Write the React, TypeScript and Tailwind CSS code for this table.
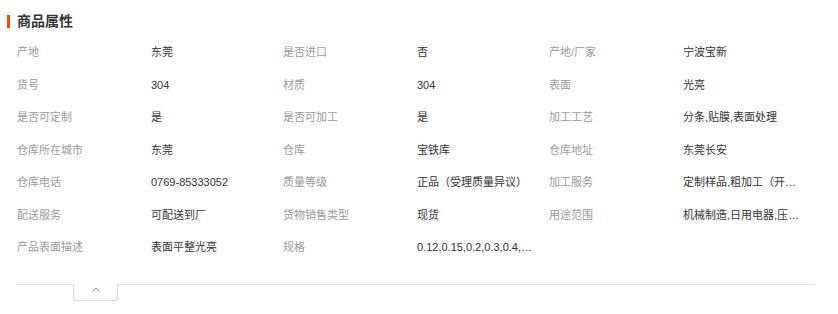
import React from 'react';

type Attr = { label: string; value: string };

const attrs: Attr[] = [
  { label: '产地', value: '东莞' },
  { label: '是否进口', value: '否' },
  { label: '产地/厂家', value: '宁波宝新' },
  { label: '货号', value: '304' },
  { label: '材质', value: '304' },
  { label: '表面', value: '光亮' },
  { label: '是否可定制', value: '是' },
  { label: '是否可加工', value: '是' },
  { label: '加工工艺', value: '分条,贴膜,表面处理' },
  { label: '仓库所在城市', value: '东莞' },
  { label: '仓库', value: '宝铁库' },
  { label: '仓库地址', value: '东莞长安' },
  { label: '仓库电话', value: '0769-85333052' },
  { label: '质量等级', value: '正品（受理质量异议）' },
  { label: '加工服务', value: '定制样品,粗加工（开平,分条,剪切）' },
  { label: '配送服务', value: '可配送到厂' },
  { label: '货物销售类型', value: '现货' },
  { label: '用途范围', value: '机械制造,日用电器,压力容器,建筑装饰' },
  { label: '产品表面描述', value: '表面平整光亮' },
  { label: '规格', value: '0.12,0.15,0.2,0.3,0.4,0.5,0.6,0.8' },
];

const font = { fontFamily: '"Liberation Sans", "Noto Sans CJK SC", sans-serif' };

export default function App() {
  return (
    <div className="w-[838px] h-[314px] bg-white" style={font}>
      {/* Section header */}
      <div className="flex items-center h-[20px] mt-[11px] pl-[7px]">
        <span className="w-[3px] h-[13px] bg-[#ff4400]" />
        <h2 className="ml-[7px] text-[14px] font-bold leading-none text-[#333]">商品属性</h2>
      </div>

      {/* Attribute grid */}
      <div className="mt-[5px] ml-[17px] w-[798px] grid grid-cols-[134px_132px_134px_132px_134px_132px] auto-rows-[32.5px] items-center text-[11px] leading-[16px]">
        {attrs.map((a) => (
          <React.Fragment key={a.label}>
            <div className="truncate pr-3 text-[#999]">{a.label}</div>
            <div className="truncate pr-[14px] text-[#333]">{a.value}</div>
          </React.Fragment>
        ))}
      </div>

      {/* Divider with collapse tab */}
      <div className="relative mt-[20px] ml-[16px] w-[799px] border-t border-[#e3e3e3]">
        <button className="absolute left-[57px] top-[-1px] w-[45px] h-[17px] bg-white border border-t-0 border-[#dcdcdc] rounded-b-[3px] flex items-start justify-center pt-[3px]">
          <svg width="8" height="5" viewBox="0 0 8 5" fill="none">
            <polyline points="0.5,4.5 4,1 7.5,4.5" stroke="#999" strokeWidth="1" />
          </svg>
        </button>
      </div>
    </div>
  );
}
